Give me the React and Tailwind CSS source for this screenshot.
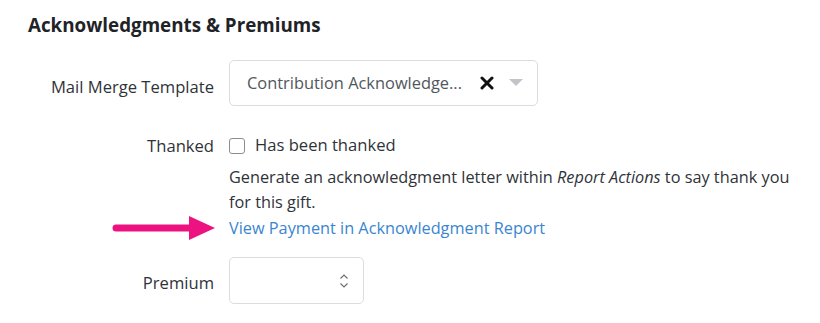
import React from "react";

const Arrow = () => (
  <svg width="106" height="26" viewBox="0 0 106 26" className="absolute -left-[118px] top-[-1px]">
    <line x1="5" y1="13" x2="82" y2="13" stroke="#ec1380" strokeWidth="7" strokeLinecap="round" />
    <polygon points="78,1 104,13 78,25" fill="#ec1380" />
  </svg>
);

const App = () => {
  return (
    <div className="w-[820px] h-[323px] bg-white text-[#212529] font-['Open_Sans',sans-serif] pl-[28px] pt-[12px]">
      <h2 className="text-[18.8px] font-bold text-[#1f2328] leading-[26px]">Acknowledgments &amp; Premiums</h2>

      <div className="mt-[22px] flex flex-col">
        <div className="flex items-start">
          <label className="w-[201px] text-right pr-[15px] pt-[15px] text-[16.6px] text-[#2f3338]">Mail Merge Template</label>
          <div className="w-[309px] h-[46px] border border-[#dcdcdc] rounded-[5px] flex items-center pl-[17px] pr-[14px]">
            <span className="text-[16.4px] text-[#51575d] flex-1 truncate">Contribution Acknowledge...</span>
            <svg width="14" height="14" viewBox="0 0 14 14" className="mr-[15px]">
              <path d="M2 2 L12 12 M12 2 L2 12" stroke="#111" strokeWidth="3" strokeLinecap="round" />
            </svg>
            <svg width="14" height="8" viewBox="0 0 14 8">
              <polygon points="0,0 14,0 7,7" fill="#c2c4c7" />
            </svg>
          </div>
        </div>

        <div className="flex items-start mt-[27px]">
          <label className="w-[201px] text-right pr-[15px] text-[16.6px] text-[#2f3338] leading-[25px]">Thanked</label>
          <div className="w-[576px]">
            <div className="flex items-center gap-[10px] h-[25px]">
              <span className="w-[16px] h-[16px] border border-[#8a8d91] rounded-[3px] bg-white"></span>
              <span className="text-[16.6px] text-[#2f3338]">Has been thanked</span>
            </div>
            <p className="mt-[7px] text-[16.3px] leading-[25px] text-[#2f3338]">
              Generate an acknowledgment letter within <i>Report Actions</i> to say thank you for this gift.
            </p>
            <div className="relative mt-[1px]">
              <Arrow />
              <a className="text-[16.3px] leading-[25px] text-[#3a85d0]">View Payment in Acknowledgment Report</a>
            </div>
          </div>
        </div>

        <div className="flex items-center mt-[16px]">
          <label className="w-[201px] text-right pr-[15px] pt-[5px] text-[16.6px] text-[#2f3338]">Premium</label>
          <div className="w-[135px] h-[47px] border border-[#dcdcdc] rounded-[5px] flex items-center justify-end pr-[14px]">
            <svg width="10" height="16" viewBox="0 0 10 16">
              <path d="M1.5 5.5 L5 2 L8.5 5.5 M1.5 10.5 L5 14 L8.5 10.5" stroke="#6b6f73" strokeWidth="1.2" fill="none" />
            </svg>
          </div>
        </div>
      </div>
    </div>
  );
};

export default App;
